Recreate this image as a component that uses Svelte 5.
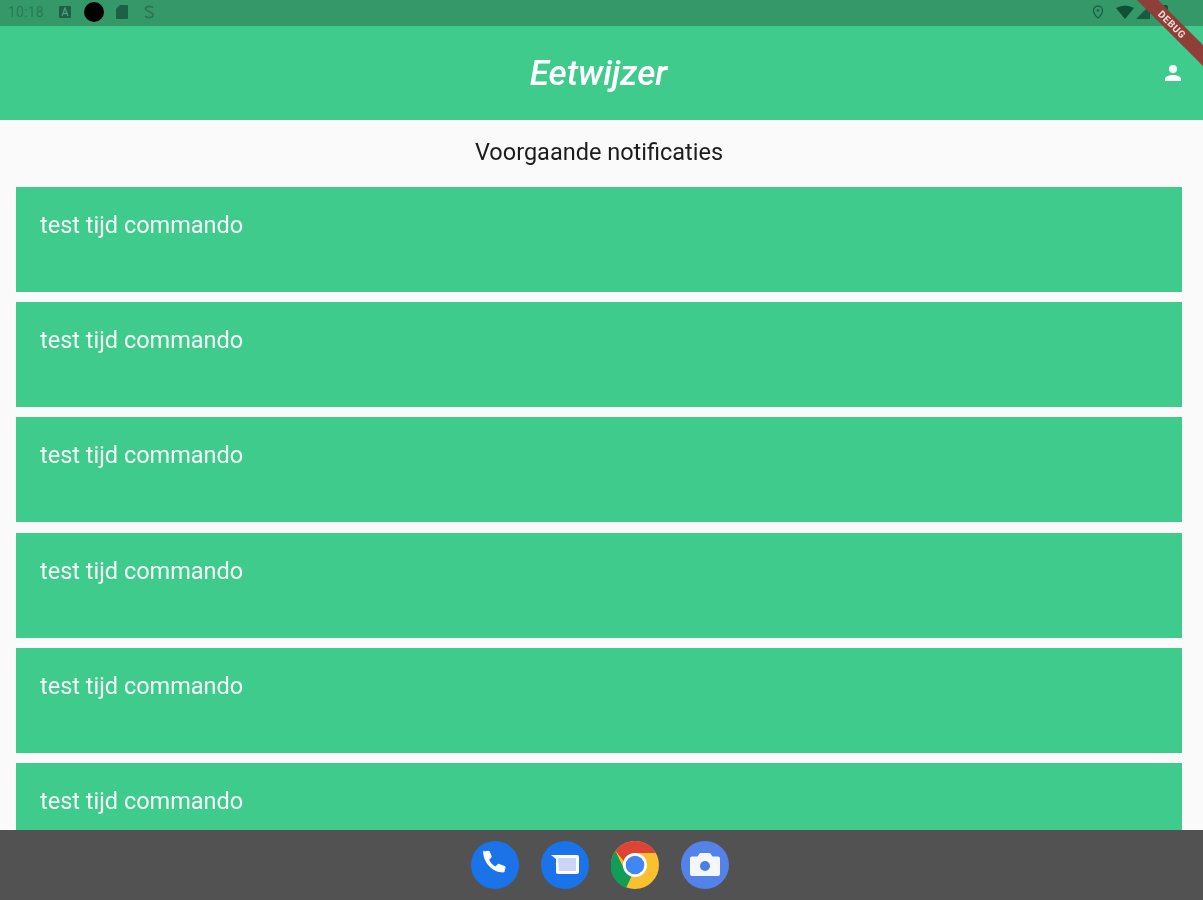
<script>
  const rows = Array(6).fill('test tijd commando');
</script>

<div class="screen">
  <div class="status">
    <span class="time">10:18</span>
    <svg class="ic a" width="14" height="14" viewBox="0 0 14 14"><rect x="1" y="1" width="12" height="12" rx="1" fill="#1f5f45"/><path d="M4 11 7 3l3 8M5 8.500h4" stroke="#4a9d7b" stroke-width="1.300" fill="none"/></svg>
    <span class="dot"></span>
    <svg class="ic sd" width="14" height="16" viewBox="0 0 14 16"><path d="M5 1h7a1 1 0 0 1 1 1v12a1 1 0 0 1-1 1H2a1 1 0 0 1-1-1V5z" fill="#1f5f45"/></svg>
    <svg class="ic s" width="14" height="16" viewBox="0 0 14 16"><path d="M11 3.500C10 2 4 1.500 3.500 4.500S11 7.500 11 11s-7 3-8 1" stroke="#2a7654" stroke-width="1.800" fill="none"/></svg>
    <span class="spacer"></span>
    <svg class="ic" width="14" height="16" viewBox="0 0 14 16"><path d="M7 2a4.500 4.500 0 0 0-4.500 4.500C2.500 10 7 14 7 14s4.500-4 4.500-7.500A4.500 4.500 0 0 0 7 2z" fill="none" stroke="#1f5f45" stroke-width="1.300"/><circle cx="7" cy="6.500" r="1.300" fill="#1f5f45"/></svg>
    <svg class="ic wifi" width="18" height="14" viewBox="0 0 18 14"><path d="M0 3Q9-2 18 3L9 14z" fill="#0e4f35"/></svg>
    <svg class="ic sig" width="14" height="14" viewBox="0 0 14 14"><path d="M14 0v14H0z" fill="#1a5b40"/></svg>
    <span class="batt"></span>
  </div>

  <header class="bar">
    <h1>Eetwijzer</h1>
    <svg class="person" width="24" height="24" viewBox="0 0 24 24"><path fill="#fff" d="M12 12a4 4 0 1 0 0-8 4 4 0 0 0 0 8zm0 2c-2.700 0-8 1.300-8 4v2h16v-2c0-2.700-5.300-4-8-4z"/></svg>
  </header>

  <main>
    <p class="heading">Voorgaande notificaties</p>
    <div class="list">
      {#each rows as row}
        <div class="card">{row}</div>
      {/each}
    </div>
  </main>

  <div class="ribbon"><span>DEBUG</span></div>

  <nav class="dock">
    <span class="app">
      <svg width="48" height="48" viewBox="0 0 48 48"><circle cx="24" cy="24" r="24" fill="#1a73e8"/><path fill="#fff" d="M13.500 10.500l3.500-.8c.8-.2 1.500.2 1.800.9l1.700 4.500c.3.700.1 1.400-.4 1.900l-2 1.700c1.300 2.900 3.500 5.300 6.400 6.800l1.900-2.100c.5-.5 1.200-.7 1.900-.4l5.300 2c.7.300 1.100 1.100.9 1.800l-.8 3.500c-.2.700-.8 1.200-1.500 1.200-11 0-20-10-20-20.400 0-.7.500-1.400 1.100-1.600z"/></svg>
    </span>
    <span class="app">
      <svg width="48" height="48" viewBox="0 0 48 48"><circle cx="24" cy="24" r="24" fill="#1a73e8"/><path fill="#fff" d="M10 14h26a2 2 0 0 1 2 2v15a2 2 0 0 1-2 2H17a2 2 0 0 1-2-2V18z"/><path fill="#c9d6f5" d="M17 17h18v13H18z"/></svg>
    </span>
    <span class="app">
      <svg width="48" height="48" viewBox="0 0 48 48">
        <circle cx="24" cy="24" r="24" fill="#fbc02d"/>
        <path fill="#db4437" d="M24 0a24 24 0 0 1 20.800 12H24a12 12 0 0 0-11.300 8L4.500 10A24 24 0 0 1 24 0z"/>
        <path fill="#0f9d58" d="M4.500 10l9.500 20 6.500 5.500L15 47a24 24 0 0 1-10.500-37z"/>
        <circle cx="24" cy="24" r="12" fill="#fff"/>
        <circle cx="24" cy="24" r="9.300" fill="#4285f4"/>
      </svg>
    </span>
    <span class="app">
      <svg width="48" height="48" viewBox="0 0 48 48"><circle cx="24" cy="24" r="24" fill="#5383e8"/><path fill="#f4f6fa" d="M19 12h10l2.500 3.500H37a2 2 0 0 1 2 2V33a2 2 0 0 1-2 2H11a2 2 0 0 1-2-2V17.500a2 2 0 0 1 2-2h5.500z"/><circle cx="24" cy="25" r="5" fill="#4a7fe6"/></svg>
    </span>
  </nav>
</div>

<style>
  :global(body) { margin: 0; background: #fafafa; }
  .screen {
    position: relative;
    width: 1203px;
    height: 900px;
    overflow: hidden;
    display: flex;
    flex-direction: column;
    background: #fafafa;
    font-family: Roboto, "Liberation Sans", sans-serif;
    filter: blur(0.5px);
  }
  .status {
    flex: 0 0 26px;
    box-sizing: border-box;
    display: flex;
    align-items: center;
    padding: 0 35px 2px 8px;
    background: #359869;
    color: #277a55;
    font-size: 14px;
  }
  .time { width: 40px; letter-spacing: 0.2px; }
  .a { margin-left: 10px; }
  .dot { width: 20px; height: 20px; border-radius: 50%; background: #000; margin-left: 12px; }
  .sd { margin-left: 11px; }
  .s { margin-left: 13px; }
  .spacer { flex: 1; }
  .wifi { margin-left: 11px; }
  .sig { margin-left: 2px; }
  .batt { width: 10px; height: 15px; border-radius: 2px; background: #1a4f39; margin-left: 8px; }
  .bar {
    flex: 0 0 94px;
    display: flex;
    align-items: center;
    justify-content: center;
    position: relative;
    box-sizing: border-box;
    padding: 0 6px 0 0;
    background: #3fcb8b;
  }
  h1 {
    margin: 0;
    color: #fff;
    font-size: 35px;
    font-style: italic;
    font-weight: 500;
  }
  .person { position: absolute; right: 18px; top: 35px; }
  main {
    flex: 1;
    min-height: 0;
    overflow: hidden;
    box-sizing: border-box;
    padding: 0 21px 0 16px;
  }
  .heading {
    margin: 0;
    height: 67px;
    line-height: 64px;
    text-align: center;
    font-size: 23.500px;
    color: #1c1c1c;
  }
  .list { display: flex; flex-direction: column; gap: 10.200px; }
  .card {
    flex: 0 0 105px;
    box-sizing: border-box;
    padding: 24px 24px 0;
    background: #3fcb8b;
    color: #f4fdf9;
    font-size: 23.500px;
    line-height: 28px;
  }
  .ribbon {
    position: absolute;
    top: 17px;
    right: -29px;
    width: 120px;
    height: 15px;
    background: #8f3f37;
    transform: rotate(45deg);
    display: flex;
    align-items: center;
    justify-content: center;
    color: #eedcd8;
    font-size: 10px;
    font-weight: 700;
    letter-spacing: 0.5px;
  }
  .dock {
    flex: 0 0 70px;
    display: flex;
    justify-content: center;
    align-items: center;
    gap: 22.200px;
    padding: 0 3px 1px 0;
    background: #525252;
    box-sizing: border-box;
  }
  .app { display: block; width: 48px; height: 48px; }
  .app svg, .ic { display: block; }
</style>
